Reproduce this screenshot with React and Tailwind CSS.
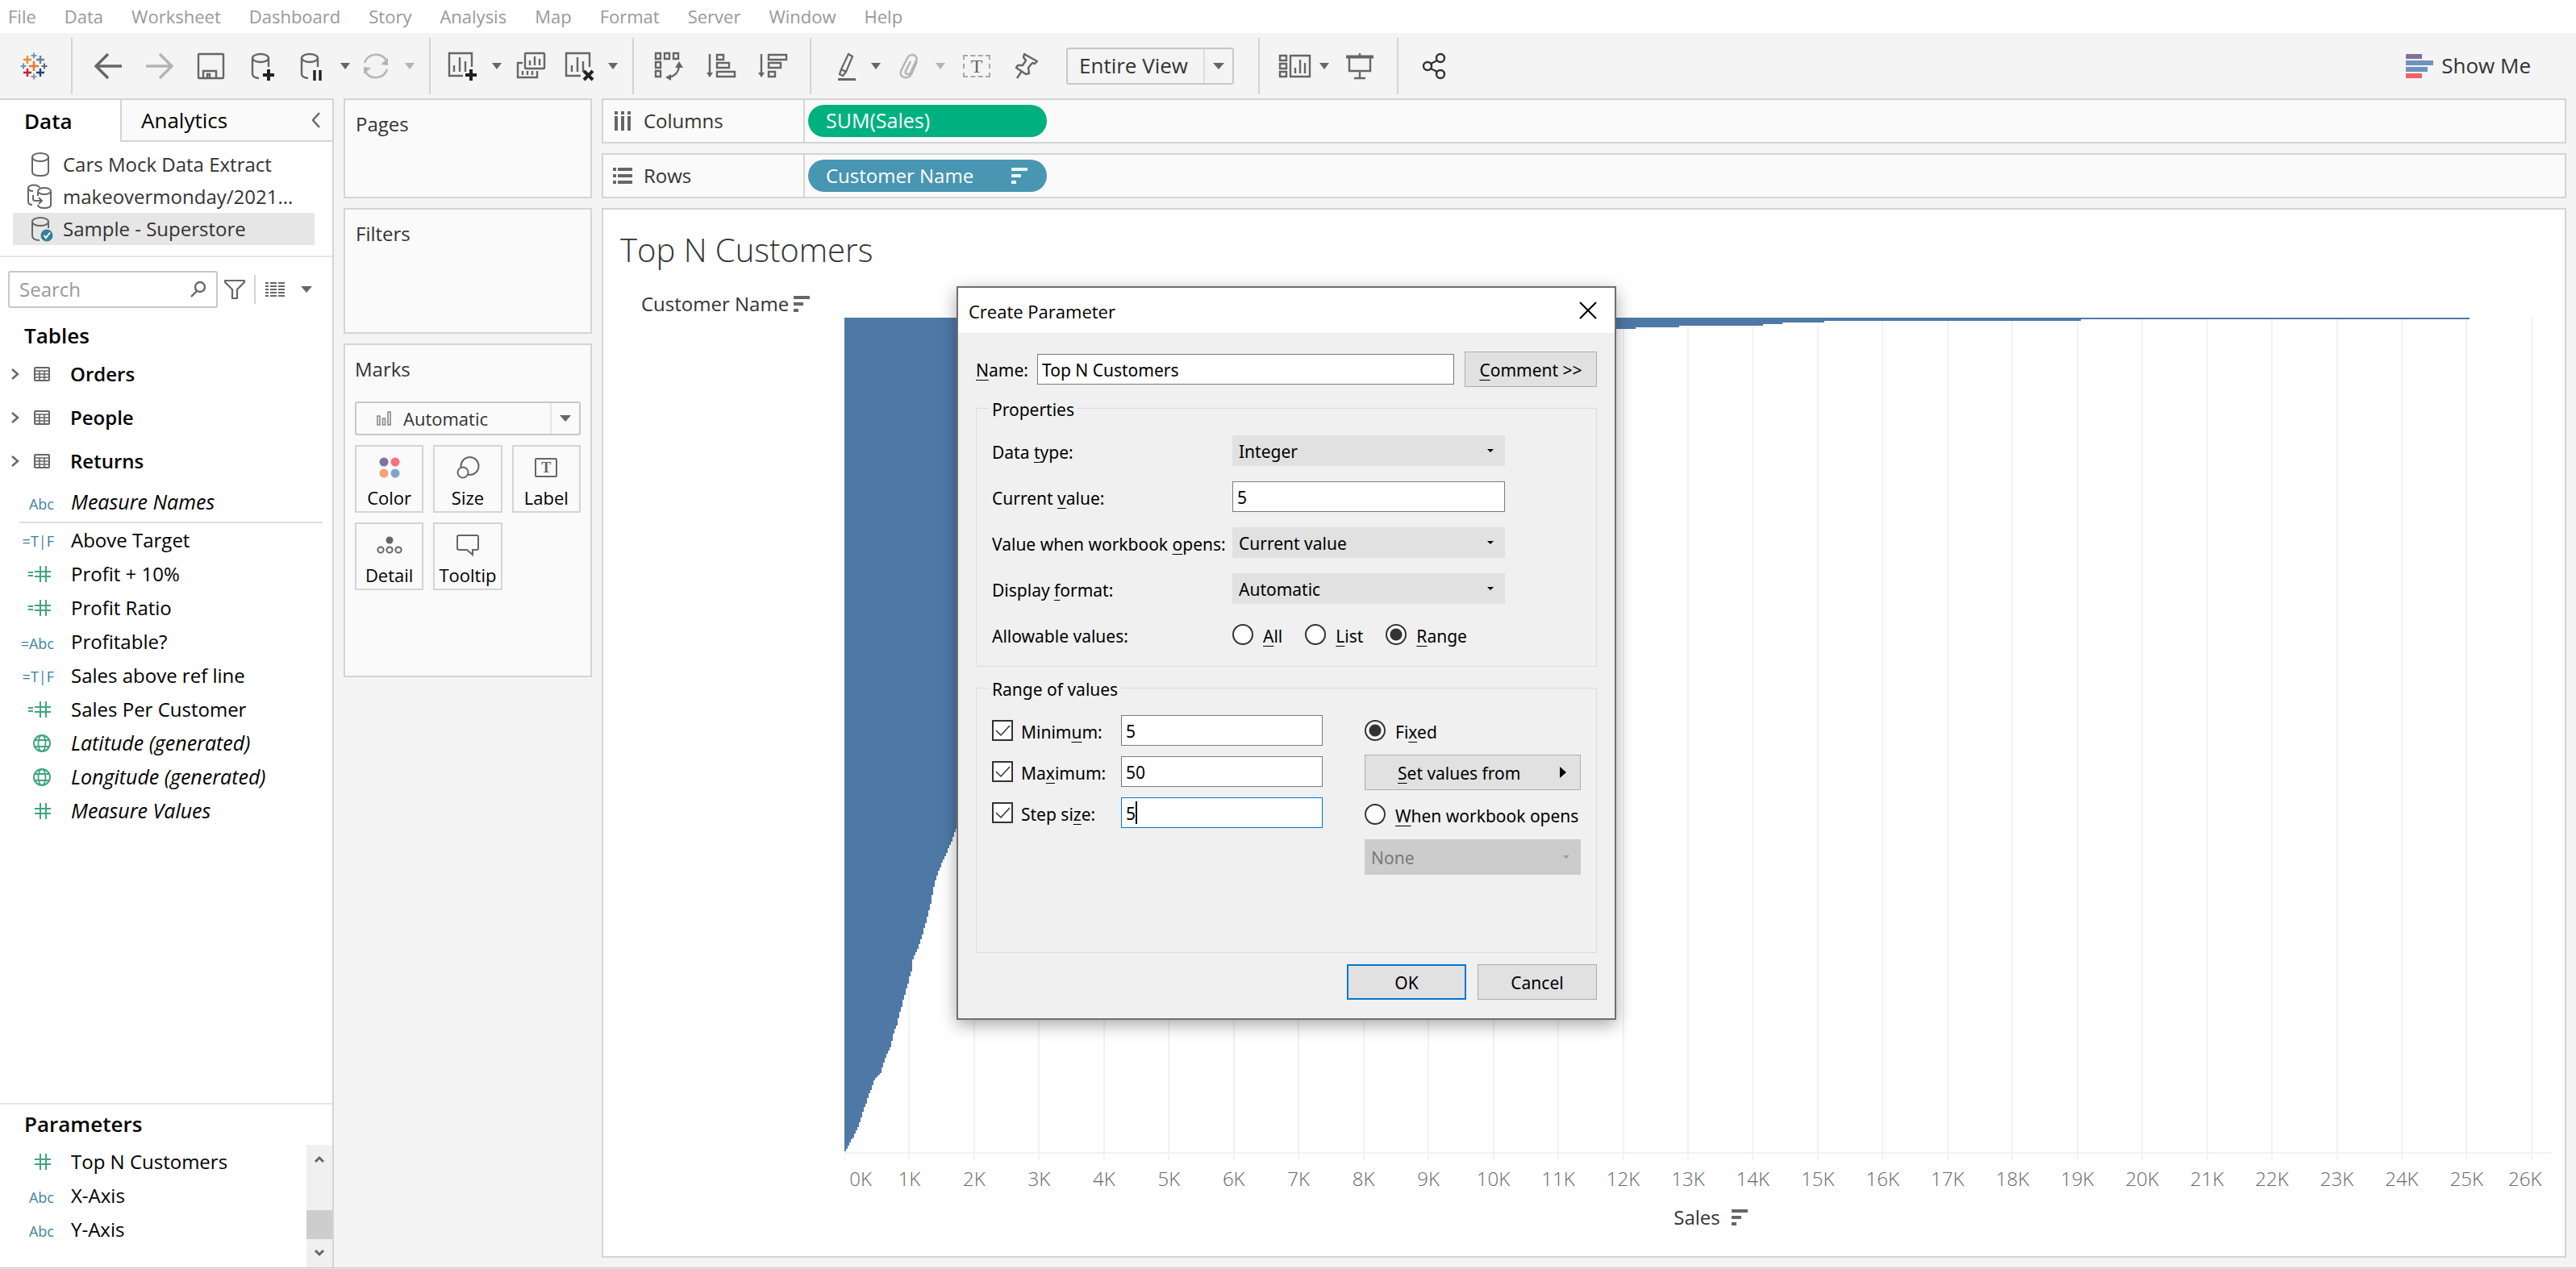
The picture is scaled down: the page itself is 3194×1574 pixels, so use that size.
import { useState } from "react";
import clsx from "clsx";

const MENUS = ["File", "Data", "Worksheet", "Dashboard", "Story", "Analysis", "Map", "Format", "Server", "Window", "Help"];

const FIELDS = [
  { kind: "calcBool", name: "Above Target" },
  { kind: "calcNumber", name: "Profit + 10%" },
  { kind: "calcNumber", name: "Profit Ratio" },
  { kind: "calcText", name: "Profitable?" },
  { kind: "calcBool", name: "Sales above ref line" },
  { kind: "calcNumber", name: "Sales Per Customer" },
  { kind: "geo", name: "Latitude (generated)", generated: true },
  { kind: "geo", name: "Longitude (generated)", generated: true },
  { kind: "number", name: "Measure Values", generated: true }
];

const PARAMETERS = [
  { kind: "number", name: "Top N Customers" },
  { kind: "text", name: "X-Axis" },
  { kind: "text", name: "Y-Axis" }
];

// Plot area units: one unit is one pixel at the default window size
const PLOT_W = 2116;
const PLOT_H = 1037;
const UNITS_PER_K = 80.46;

// The few top customers, one 2px row each
const TOP_BARS = [2015, 1533, 1215, 1163, 1139, 1035, 981, 930, 890, 860, 830];

// [y, width] outline of the long tail, widths interpolated in between
const TAIL = [
  [22, 790], [60, 560], [120, 430], [220, 330], [340, 260], [460, 200], [560, 165], [620, 142],
  [632, 139], [648, 133], [662, 127], [680, 119], [696, 113], [725, 107], [749, 101],
  [763, 97], [781, 91], [794, 85], [809, 83], [824, 79], [853, 71], [876, 65],
  [889, 60], [901, 58], [916, 51], [935, 45], [944, 37], [956, 33], [973, 27], [990, 21],
  [1002, 17], [1015, 11], [1025, 5], [1034, 1]
];

function buildOutline() {
  let d = "M0 0";
  TOP_BARS.forEach((w, i) => {
    d += `H${w}V${(i + 1) * 2}`;
  });
  for (let i = 1; i < TAIL.length; i++) {
    const [y0, w0] = TAIL[i - 1];
    const [y1, w1] = TAIL[i];
    for (let y = y0; y < y1; y += 2) {
      const w = w0 + ((w1 - w0) * (y - y0)) / (y1 - y0);
      d += `H${Math.round(w / 2) * 2}V${Math.min(y + 2, y1)}`;
    }
  }
  return `${d}H0Z`;
}

const OUTLINE = buildOutline();
const TICKS = Array.from({ length: 27 }, (_, i) => i);

function Icon({ children, className = "size-9", box = "0 0 36 36", color = "#666" }) {
  return (
    <svg viewBox={box} className={clsx("shrink-0 overflow-visible", className)} fill="none" stroke={color} strokeWidth="2.4" aria-hidden="true">
      {children}
    </svg>
  );
}

function Caret({ className = "h-2 w-3", color = "#666" }) {
  return (
    <svg viewBox="0 0 12 7" preserveAspectRatio="none" className={clsx("shrink-0", className)} fill={color} aria-hidden="true">
      <path d="M0 0H12L6 7Z" />
    </svg>
  );
}

function Tool({ label, className, children }) {
  return (
    <button type="button" aria-label={label} className={clsx("flex h-9 shrink-0 items-center", className)}>
      {children}
    </button>
  );
}

function Separator({ className }) {
  return <div className={clsx("h-[70px] w-0.5 shrink-0 bg-[#d4d4d4]", className)} />;
}

function SortBars({ className, color = "#666" }) {
  return (
    <svg viewBox="0 0 20 20" className={clsx("size-5 shrink-0", className)} fill={color} aria-hidden="true">
      <path d="M0 0H20V4H0ZM0 8H12V12H0ZM0 16H6V20H0Z" />
    </svg>
  );
}

function Logo() {
  const plus = (x, y, r, w, c) => <path d={`M${x - r} ${y}H${x + r}M${x} ${y - r}V${y + r}`} stroke={c} strokeWidth={w} />;
  return (
    <Icon>
      {plus(18, 18, 6, 2.6, "#e8762d")}
      {plus(10, 10, 5, 2.4, "#eb912c")}
      {plus(26, 10, 5, 2.4, "#59879b")}
      {plus(10, 26, 5, 2.4, "#c72035")}
      {plus(26, 26, 5, 2.4, "#1f447e")}
      {plus(18, 5, 3.5, 2, "#7199a6")}
      {plus(18, 31, 3.5, 2, "#8b93b8")}
      {plus(5, 18, 3.5, 2, "#7199a6")}
      {plus(31, 18, 3.5, 2, "#5b6591")}
    </Icon>
  );
}

function Toolbar() {
  return (
    <div className="flex h-[81px] items-center">
      <Tool label="Start page" className="ml-6"><Logo /></Tool>
      <Separator className="ml-7" />
      <Tool label="Undo" className="ml-6.5">
        <Icon><path d="M35 18H3M18 3L3 18L18 33" strokeWidth="3.4" /></Icon>
      </Tool>
      <Tool label="Redo" className="ml-7">
        <Icon color="#b4b4b4"><path d="M1 18H33M18 3L33 18L18 33" strokeWidth="3.4" /></Icon>
      </Tool>
      <Tool label="Save" className="ml-7">
        <Icon><rect x="2" y="3" width="31" height="30" rx="1" /><path d="M8 33V24H24V33M13 33V28H16V33" /></Icon>
      </Tool>
      <Tool label="New data source" className="ml-7">
        <Icon>
          <ellipse cx="15" cy="8" rx="10" ry="5" />
          <path d="M5 8V28Q5 32 13 33M25 8V19" />
          <path d="M25 22V36M18 29H32" stroke="#222" strokeWidth="4" />
        </Icon>
      </Tool>
      <Tool label="Pause auto updates" className="ml-6">
        <Icon>
          <ellipse cx="16" cy="8" rx="10" ry="5" />
          <path d="M6 8V28Q6 32 14 33M26 8V19" />
          <path d="M22 23V36M29 23V36" stroke="#222" strokeWidth="3.4" />
        </Icon>
      </Tool>
      <Tool label="Update options" className="ml-4.5"><Caret /></Tool>
      <Tool label="Run update" className="ml-3.5">
        <Icon color="#b4b4b4">
          <path d="M4 14A15 15 0 0 1 31 11M32 22A15 15 0 0 1 5 25" />
          <path d="M33 8V17L24 16ZM3 28V19L12 20Z" fill="#b4b4b4" stroke="none" />
        </Icon>
      </Tool>
      <Tool label="Run options" className="ml-4.5"><Caret color="#b4b4b4" /></Tool>
      <Separator className="ml-4.5" />
      <Tool label="New worksheet" className="ml-5">
        <Icon>
          <path d="M20 30H3V2H31V19" />
          <path d="M9 25V17M16 25V7M23 25V12" />
          <path d="M30 22V36M23 29H37" stroke="#222" strokeWidth="4" />
        </Icon>
      </Tool>
      <Tool label="New sheet options" className="ml-5"><Caret /></Tool>
      <Tool label="Duplicate" className="ml-4.5">
        <Icon>
          <rect x="11" y="2" width="24" height="19" rx="1" />
          <path d="M17 17V11M23 17V6M29 17V9" />
          <path d="M8 14H2V32H26V24M8 29V24M14 29V24M20 29V24" />
        </Icon>
      </Tool>
      <Tool label="Clear sheet" className="ml-6">
        <Icon>
          <path d="M20 30H2V2H31V19" />
          <path d="M9 25V17M16 25V7M23 25V12" />
          <path d="M24 24L35 35M35 24L24 35" stroke="#222" strokeWidth="4" />
        </Icon>
      </Tool>
      <Tool label="Clear options" className="ml-4.5"><Caret /></Tool>
      <Separator className="ml-4.5" />
      <Tool label="Swap rows and columns" className="ml-6">
        <Icon>
          <path d="M3 2H9V9H3ZM14 2H20V9H14ZM25 2H31V9H25ZM3 13H9V20H3ZM3 24H9V31H3Z" />
          <path d="M32 18Q31 29 20 32" />
          <path d="M32 12L37 20H27ZM15 32L22 28V36Z" fill="#666" stroke="none" />
        </Icon>
      </Tool>
      <Tool label="Sort ascending" className="ml-7.5">
        <Icon>
          <path d="M4 3V28M13 4H21V10H13ZM13 14H28V20H13ZM13 25H35V31H13Z" />
          <path d="M0 26H8L4 32Z" fill="#666" stroke="none" />
        </Icon>
      </Tool>
      <Tool label="Sort descending" className="ml-7">
        <Icon>
          <path d="M4 3V28M13 4H35V10H13ZM13 14H28V20H13ZM13 25H21V31H13Z" />
          <path d="M0 26H8L4 32Z" fill="#666" stroke="none" />
        </Icon>
      </Tool>
      <Separator className="ml-7" />
      <Tool label="Highlight" className="ml-6.5">
        <Icon>
          <path d="M20 3L25 6L17 25L11 22ZM11 22L9 28L13 30L17 25" strokeWidth="2.2" />
          <path d="M7 34.5H29" strokeWidth="3" />
        </Icon>
      </Tool>
      <Tool label="Highlight options" className="ml-3"><Caret /></Tool>
      <Tool label="Group members" className="ml-4.5">
        <Icon color="#b4b4b4">
          <path d="M27 12L20 28C17 35 4 33 7 24L15 8C18 1 29 4 26 11L19 26C17 30 11 28 13 24L19 12" />
        </Icon>
      </Tool>
      <Tool label="Group options" className="ml-3.5"><Caret color="#b4b4b4" /></Tool>
      <Tool label="Show mark labels" className="ml-5.5">
        <span className="flex h-7 w-[34px] items-center justify-center border-2 border-dashed border-[#a8a8a8] font-['Liberation_Serif',serif] text-[24px] leading-none text-[#666]">T</span>
      </Tool>
      <Tool label="Fix axes" className="ml-6.5">
        <Icon>
          <path d="M16 3L32 12L29 15L26 14L21 20L22 27L18 28L6 20L8 17L14 17L18 11L15 7ZM13 24L7 33" strokeLinejoin="round" />
        </Icon>
      </Tool>
      <div className="relative ml-8 flex h-[46px] w-[208px] shrink-0 items-center">
        <select aria-label="Fit" className="size-full appearance-none rounded-[3px] border-2 border-[#c8c8c8] pl-3.5 text-[26px] text-[#333]">
          <option>Entire View</option>
        </select>
        <span className="pointer-events-none absolute inset-y-0.5 right-0.5 flex w-9 items-center justify-center border-l-2 border-[#dedede]">
          <Caret className="h-2 w-3.5" />
        </span>
      </div>
      <Separator className="ml-7.5" />
      <Tool label="Show or hide cards" className="ml-6">
        <Icon className="h-9 w-10" box="0 0 40 36">
          <path d="M1 5H9V11H1ZM1 15H9V21H1ZM1 25H9V31H1ZM14 5H38V31H14Z" />
          <path d="M20 27V20M26 27V10M32 27V14" />
        </Icon>
      </Tool>
      <Tool label="Card options" className="ml-2.5"><Caret /></Tool>
      <Tool label="Presentation mode" className="ml-5">
        <Icon>
          <path d="M1 6.5H35" strokeWidth="4" />
          <path d="M5 8V24H31V8M18 2V6M18 24V33M11 33H25" />
        </Icon>
      </Tool>
      <Separator className="ml-7" />
      <Tool label="Share" className="ml-6.5">
        <Icon color="#333">
          <circle cx="10" cy="18" r="5" />
          <circle cx="26" cy="8" r="5" />
          <circle cx="26" cy="28" r="5" />
          <path d="M14 15L22 11M14 21L22 25" />
        </Icon>
      </Tool>
      <button type="button" className="mr-14 ml-auto flex items-center gap-2.5 text-[26px] text-[#333]">
        <svg viewBox="0 0 34 30" className="h-[30px] w-[34px]" aria-hidden="true">
          <path d="M0 0H20V6H0Z" fill="#85709a" />
          <path d="M0 8H34V14H0Z" fill="#6c94bf" />
          <path d="M0 16H27V22H0Z" fill="#6c94bf" />
          <path d="M0 24H20V30H0Z" fill="#f4606c" />
        </svg>
        Show Me
      </button>
    </div>
  );
}

function Cylinder({ badge, joined }) {
  if (joined) {
    return (
      <Icon className="h-[30px] w-[30px]" box="0 0 30 30">
        <path d="M15 4A7 3.500 0 1 0 1 4V21Q1 25 6 25M1 4Q1 8 7 8M7 13V18Q7 20 10 20H17M14 16L18 20L14 24" strokeWidth="2" />
        <path d="M13 14V9M13 25Q13 29 21 29T29 25V9" strokeWidth="2" />
        <ellipse cx="21" cy="8" rx="8" ry="4" strokeWidth="2" />
      </Icon>
    );
  }
  return (
    <Icon className="h-[30px] w-[22px]" box="0 0 22 30">
      <ellipse cx="11" cy="6" rx="10" ry="5" strokeWidth="2" />
      <path d={badge ? "M1 6V23Q1 29 10 29M21 6V14" : "M1 6V24Q1 29 11 29T21 24V6"} strokeWidth="2" />
      {badge && (
        <>
          <circle cx="19" cy="23" r="7.500" fill="#36809f" stroke="none" />
          <path d="M15.500 23L18 26L23 19.500" stroke="#fff" strokeWidth="2" />
        </>
      )}
    </Icon>
  );
}

function TypeIcon({ kind }) {
  if (kind === "text") return <span className="pt-1 text-[18px] font-medium text-[#3d84a3]">Abc</span>;
  if (kind === "calcText") return <span className="pt-1 text-[18px] font-medium text-[#3d84a3]">=Abc</span>;
  if (kind === "calcBool") return <span className="pt-0.5 text-[18px] font-medium text-[#36809f]">=T|F</span>;
  if (kind === "geo") {
    return (
      <Icon className="mr-1 size-[22px]" box="0 0 22 22" color="#3fa67c">
        <circle cx="11" cy="11" r="10" strokeWidth="2" />
        <ellipse cx="11" cy="11" rx="4.500" ry="10" strokeWidth="1.800" />
        <path d="M2 7H20M2 15H20" strokeWidth="1.800" />
      </Icon>
    );
  }
  return (
    <>
      {kind === "calcNumber" && (
        <Icon className="mr-0.5 h-2 w-1.5" box="0 0 6 8" color="#3fa67c">
          <path d="M0 2H6M0 6H6" strokeWidth="2" />
        </Icon>
      )}
      <Icon className="mr-1 size-5" box="0 0 20 20" color="#3fa67c">
        <path d="M7 0V20M14 0V20M0 7H20M0 13H20" strokeWidth="2" />
      </Icon>
    </>
  );
}

function FieldRow({ kind, name, generated, className = "h-[42px]" }) {
  return (
    <li className={clsx("flex items-center whitespace-nowrap text-black", className)}>
      <span className="flex w-[67px] items-center justify-end">
        <TypeIcon kind={kind} />
      </span>
      <span className={clsx("ml-[21px]", generated ? "text-[25px] italic" : "text-[24px]")}>{name}</span>
    </li>
  );
}

function DataPane() {
  const [query, setQuery] = useState("");
  return (
    <aside className="flex w-[414px] shrink-0 flex-col border-t-2 border-r-2 border-[#d4d4d4] bg-white">
      <div className="flex h-[52px] text-[26px] text-black">
        <button type="button" className="w-[149px] pr-1 pl-[30px] text-left font-semibold">Data</button>
        <div className="flex flex-1 items-center justify-between border-b-2 border-l-2 border-[#d4d4d4] bg-[#fafafa] pr-3.5 pl-6">
          <button type="button">Analytics</button>
          <button type="button" aria-label="Collapse pane">
            <Icon className="h-5 w-3" box="0 0 12 20"><path d="M10 1L2 10L10 19" /></Icon>
          </button>
        </div>
      </div>

      <ul className="pt-2 pr-[22px] pl-4 text-[24px] text-[#333]">
        <li className="flex h-10 items-center gap-[17px] pl-[23px]"><Cylinder />Cars Mock Data Extract</li>
        <li className="flex h-10 items-center gap-3.5 pl-[18px]"><Cylinder joined />makeovermonday/2021...</li>
        <li className="flex h-10 items-center gap-[17px] bg-[#e6e6e6] pl-[23px]"><Cylinder badge />Sample - Superstore</li>
      </ul>

      <div className="mt-[13px] h-0.5 bg-[#e6e6e6]" />

      <div className="mt-[17px] flex h-[46px] items-center pl-2.5">
        <label className="flex h-full w-[260px] items-center rounded-[3px] border-2 border-[#c8c8c8] pr-3 pl-3">
          <input
            type="text"
            aria-label="Search"
            placeholder="Search"
            value={query}
            onChange={(e) => setQuery(e.target.value)}
            className="w-full min-w-0 text-[24px] text-[#333] outline-none placeholder:text-[#999]"
          />
          <Icon className="size-5" box="0 0 20 20">
            <circle cx="12" cy="7" r="6" />
            <path d="M8 12L1 19" />
          </Icon>
        </label>
        <button type="button" aria-label="Filter fields" className="ml-2">
          <Icon className="h-6 w-[26px]" box="0 0 26 24">
            <path d="M1 1H25V3L16 12V23H10V12L1 3Z" strokeWidth="2.200" strokeLinejoin="round" />
          </Icon>
        </button>
        <div className="ml-[11px] h-9 w-0.5 bg-[#d4d4d4]" />
        <button type="button" aria-label="View fields" className="ml-3 flex items-center gap-5">
          <svg viewBox="0 0 24 18" className="h-[18px] w-6" stroke="#666" strokeWidth="2" shapeRendering="crispEdges" aria-hidden="true">
            <path d="M0 1H4M6 1H14M16 1H24M0 5H4M6 5H14M16 5H24M0 9H4M6 9H14M16 9H24M0 13H4M6 13H14M16 13H24M0 17H4M6 17H14M16 17H24" />
          </svg>
          <Caret className="h-2 w-3.5" />
        </button>
      </div>

      <h2 className="mt-4 flex h-9 items-center pl-[30px] text-[26px] font-semibold text-black">Tables</h2>
      <ul className="mt-[3px]">
        {["Orders", "People", "Returns"].map((name) => (
          <li key={name} className="flex h-[54px] items-center pl-3.5 text-[24px] font-semibold text-black">
            <button type="button" aria-label={`Expand ${name}`}>
              <Icon className="h-3.5 w-2.5" box="0 0 10 14"><path d="M1 1L8 7L1 13" /></Icon>
            </button>
            <Icon className="mr-[25px] ml-[18px] h-[18px] w-5" box="0 0 20 18">
              <rect x="1" y="1" width="18" height="16" rx="1" strokeWidth="2" />
              <path d="M1 5H19M1 9H19M1 13H19M7 5V17M13 5V17" strokeWidth="1.600" />
            </Icon>
            {name}
          </li>
        ))}
      </ul>

      <ul>
        <FieldRow kind="text" name="Measure Names" generated className="h-12" />
      </ul>
      <div className="mr-3 ml-6 h-0.5 bg-[#dedede]" />
      <ul>
        {FIELDS.map((f) => (
          <FieldRow key={f.name} {...f} />
        ))}
      </ul>

      <section className="mt-auto h-[204px] border-t-2 border-[#e6e6e6]">
        <h2 className="flex h-12 items-center pl-[30px] text-[26px] font-semibold text-black">Parameters</h2>
        <div className="flex pt-0.5">
          <ul className="flex-1">
            {PARAMETERS.map((p) => (
              <FieldRow key={p.name} {...p} />
            ))}
          </ul>
          <div className="flex h-[152px] w-8 flex-col items-center bg-[#f0f0f0]">
            <button type="button" aria-label="Scroll up" className="flex h-9 items-center">
              <Icon className="h-2 w-3" box="0 0 12 8"><path d="M1 7L6 2L11 7" strokeWidth="3" /></Icon>
            </button>
            <div className="mt-[46px] h-9 w-full bg-[#cdcdcd]" />
            <button type="button" aria-label="Scroll down" className="flex h-9 items-center">
              <Icon className="h-2 w-3" box="0 0 12 8"><path d="M1 1L6 6L11 1" strokeWidth="3" /></Icon>
            </button>
          </div>
        </div>
      </section>
    </aside>
  );
}

function MarkButton({ label, children }) {
  return (
    <button type="button" className="flex h-[84px] flex-col items-center border-2 border-[#d4d4d4] pt-2 text-[22px] leading-[30px] text-black">
      <span className="mb-1 flex h-9 items-center">{children}</span>
      {label}
    </button>
  );
}

function Cards() {
  return (
    <div className="flex w-[332px] shrink-0 flex-col gap-3 px-3 text-[24px] text-[#333]">
      <section className="h-[124px] border-2 border-[#d4d4d4] bg-[#fafafa] pt-3 pl-[13px]">Pages</section>
      <section className="h-[156px] border-2 border-[#d4d4d4] bg-[#fafafa] pt-3 pl-[13px]">Filters</section>
      <section className="h-[414px] border-2 border-[#d4d4d4] bg-[#fafafa] px-3">
        <h2 className="mt-3 leading-9">Marks</h2>
        <div className="relative mt-[22px] flex h-[42px] items-center">
          <select aria-label="Mark type" className="size-full appearance-none rounded-[3px] border-2 border-[#c8c8c8] pl-[58px] text-[22px] text-[#333]">
            <option>Automatic</option>
          </select>
          <svg viewBox="0 0 18 18" className="pointer-events-none absolute left-[27px] h-[18px] w-[18px]" fill="none" stroke="#888" strokeWidth="1.600" aria-hidden="true">
            <path d="M1 6H4V17H1ZM7.500 9H10.500V17H7.500ZM14 1H17V17H14Z" />
          </svg>
          <span className="pointer-events-none absolute inset-y-0.5 right-0.5 flex w-9 items-center justify-center border-l-2 border-[#e6e6e6]">
            <Caret className="h-2 w-3.5" />
          </span>
        </div>
        <div className="mt-3 grid grid-cols-3 gap-3">
          <MarkButton label="Color">
            <svg viewBox="0 0 26 26" className="size-[26px]" aria-hidden="true">
              <circle cx="6" cy="6" r="5.500" fill="#85709a" />
              <circle cx="20" cy="6" r="5.500" fill="#f9707f" />
              <circle cx="6" cy="20" r="5.500" fill="#f2a477" />
              <circle cx="20" cy="20" r="5.500" fill="#80a4cc" />
            </svg>
          </MarkButton>
          <MarkButton label="Size">
            <Icon className="size-7" box="0 0 28 28">
              <circle cx="16.500" cy="12" r="11" strokeWidth="2" />
              <circle cx="8" cy="20" r="6.500" fill="#fafafa" strokeWidth="2" />
            </Icon>
          </MarkButton>
          <MarkButton label="Label">
            <span className="flex h-6 w-7 items-center justify-center rounded-[2px] border-2 border-[#666] font-['Liberation_Serif',serif] text-[18px] leading-none font-bold text-[#666]">T</span>
          </MarkButton>
          <MarkButton label="Detail">
            <Icon className="h-6 w-8" box="0 0 32 24">
              <circle cx="16" cy="6" r="4.500" fill="#666" stroke="none" />
              <circle cx="5" cy="18" r="3.600" strokeWidth="2" />
              <circle cx="16" cy="18" r="3.600" strokeWidth="2" />
              <circle cx="27" cy="18" r="3.600" strokeWidth="2" />
            </Icon>
          </MarkButton>
          <MarkButton label="Tooltip">
            <Icon className="h-[26px] w-7" box="0 0 28 26">
              <path d="M3 1H25Q27 1 27 3V17Q27 19 25 19H20V25L13 19H3Q1 19 1 17V3Q1 1 3 1Z" strokeWidth="2" />
            </Icon>
          </MarkButton>
        </div>
      </section>
    </div>
  );
}

function Shelf({ label, icon, children }) {
  return (
    <div className="flex h-14 shrink-0 border-2 border-[#d4d4d4] bg-[#fafafa]">
      <div className="flex w-[250px] items-center gap-3.5 border-r-2 border-[#d4d4d4] pl-3 text-[24px] text-[#333]">
        {icon}
        {label}
      </div>
      <div className="flex items-center pl-1">{children}</div>
    </div>
  );
}

function Worksheet() {
  return (
    <section className="flex min-h-0 flex-1 flex-col border-2 border-[#d4d4d4] bg-white pr-[17px] pb-7.5 pl-[21px]">
      <h1 className="mt-5 h-[60px] text-[40px] leading-[60px] font-light text-[#333]">Top N Customers</h1>
      <div className="mt-5 flex h-[34px] items-center gap-1.5 pl-[26px] text-[24px] font-medium text-[#333]">
        Customer Name
        <SortBars />
      </div>
      <div className="flex min-h-0 flex-1 flex-col pl-[278px]">
        <svg viewBox={`0 0 ${PLOT_W} ${PLOT_H + 9}`} preserveAspectRatio="none" className="block min-h-0 w-full flex-1" shapeRendering="crispEdges" role="img" aria-label="Sales by customer">
          {TICKS.map((k) => (
            <rect key={k} x={Math.round(k * UNITS_PER_K) - 1} y="0" width="2" height={PLOT_H + 9} fill="#f2f2f2" />
          ))}
          <rect x="0" y={PLOT_H - 2} width={PLOT_W} height="2" fill="#f2f2f2" />
          <path d={OUTLINE} fill="#4e79a7" />
        </svg>
        <div className="mt-1 flex h-9 items-center text-[24px] font-light text-[#666]">
          {TICKS.map((k) => (
            <span key={k} className="min-w-0 text-center" style={{ flex: k === 0 ? 0.5 : k === 26 ? 0.8 : 1 }}>
              {k}K
            </span>
          ))}
        </div>
        <div className="mt-3 flex h-9 items-center justify-center gap-3.5 pl-8 text-[24px] font-medium text-[#333]">
          Sales
          <SortBars />
        </div>
      </div>
    </section>
  );
}

// "&" marks the letter that carries the keyboard shortcut
function Mnemonic({ text }) {
  const at = text.indexOf("&");
  if (at < 0) return <span>{text}</span>;
  return (
    <span>
      {text.slice(0, at)}
      <u className="decoration-1 underline-offset-4">{text[at + 1]}</u>
      {text.slice(at + 2)}
    </span>
  );
}

function TextBox({ id, className, ...rest }) {
  return <input id={id} type="text" className={clsx("h-[38px] border bg-white px-[5px] pt-0.5 outline-none", className)} {...rest} />;
}

function Combo({ id, value }) {
  return (
    <div className="relative flex h-[38px] w-[338px] items-center">
      <select id={id} className="size-full appearance-none bg-[#e1e1e1] pt-0.5 pl-2">
        <option>{value}</option>
      </select>
      <Caret className="pointer-events-none absolute right-3.5 h-1 w-2" color="#000" />
    </div>
  );
}

function Radio({ name, label, checked, onChange }) {
  return (
    <label className="flex items-center gap-3">
      <input
        type="radio"
        name={name}
        checked={checked}
        onChange={onChange}
        className="size-[26px] appearance-none rounded-full border-2 border-[#333] bg-white checked:bg-[radial-gradient(circle,#333_0_7px,#fff_8px)]"
      />
      <span className="pt-1"><Mnemonic text={label} /></span>
    </label>
  );
}

function LimitRow({ id, label, value, onChange, focused }) {
  const [on, setOn] = useState(true);
  return (
    <div className="flex h-[38px] items-center">
      <label className="flex w-40 items-center gap-2.5">
        <span className="relative flex size-[26px]">
          <input type="checkbox" checked={on} onChange={(e) => setOn(e.target.checked)} className="size-[26px] appearance-none border-2 border-[#333] bg-white" />
          {on && (
            <svg viewBox="0 0 26 26" className="pointer-events-none absolute inset-0" fill="none" stroke="#333" strokeWidth="1.500" aria-hidden="true">
              <path d="M5 13L11 19L22 7" />
            </svg>
          )}
        </span>
        <span className="pt-1"><Mnemonic text={label} /></span>
      </label>
      <span className="relative flex items-center">
        <TextBox
          id={id}
          aria-label={label.replace("&", "")}
          value={value}
          onChange={(e) => onChange(e.target.value)}
          className={clsx("w-[250px]", focused ? "border-[#0078d7]" : "border-[#7a7a7a]")}
        />
        {focused && <span className="absolute left-[18px] h-7 w-0.5 bg-black" />}
      </span>
    </div>
  );
}

function CreateParameterDialog() {
  const [name, setName] = useState("Top N Customers");
  const [current, setCurrent] = useState("5");
  const [allowable, setAllowable] = useState("range");
  const [source, setSource] = useState("fixed");
  const [limits, setLimits] = useState({ min: "5", max: "50", step: "5" });
  const setLimit = (key) => (v) => setLimits((prev) => ({ ...prev, [key]: v }));

  return (
    <div
      role="dialog"
      aria-labelledby="dialog-title"
      className="absolute top-[355px] left-[1186px] w-[818px] border-2 border-[#6f6f6f] bg-[#f0f0f0] font-['Noto_Sans','Open_Sans',sans-serif] text-[21px] leading-7 text-black shadow-[0_6px_20px_rgba(0,0,0,0.35)]"
    >
      <div className="flex h-14 items-center justify-between bg-white pr-[23px] pl-[13px]">
        <h2 id="dialog-title" className="pt-0.5 font-['Open_Sans',sans-serif] text-[22px]">Create Parameter</h2>
        <button type="button" aria-label="Close">
          <Icon className="size-5" box="0 0 20 20" color="#000"><path d="M0 0L20 20M20 0L0 20" strokeWidth="2" /></Icon>
        </button>
      </div>

      <div className="px-[22px] pt-[23px] pb-[23px]">
        <div className="flex h-11 items-center">
          <label htmlFor="param-name" className="w-[76px] pt-0.5"><Mnemonic text="&Name:" /></label>
          <TextBox id="param-name" value={name} onChange={(e) => setName(e.target.value)} className="min-w-0 flex-1 border-[#7a7a7a]" />
          <button type="button" className="ml-[13px] h-11 w-[164px] border border-[#adadad] bg-[#e1e1e1] pt-0.5"><Mnemonic text="&Comment >>" /></button>
        </div>

        <fieldset className="mt-3 border border-[#dcdcdc] pb-5 pl-[19px]">
          <legend className="-ml-1 px-1 pt-1 leading-6">Properties</legend>
          <div className="mt-5 grid auto-rows-[38px] grid-cols-[298px_1fr] items-center gap-y-[19px]">
            <label htmlFor="data-type" className="pt-1"><Mnemonic text="Data &type:" /></label>
            <Combo id="data-type" value="Integer" />
            <label htmlFor="current-value" className="pt-1"><Mnemonic text="Current &value:" /></label>
            <TextBox id="current-value" value={current} onChange={(e) => setCurrent(e.target.value)} className="w-[338px] border-[#7a7a7a]" />
            <label htmlFor="on-open" className="pt-1 whitespace-nowrap"><Mnemonic text="Value when workbook &opens:" /></label>
            <Combo id="on-open" value="Current value" />
            <label htmlFor="display-format" className="pt-1"><Mnemonic text="Display &format:" /></label>
            <Combo id="display-format" value="Automatic" />
            <span className="pt-1">Allowable values:</span>
            <div className="flex gap-7">
              <Radio name="allowable" label="&All" checked={allowable === "all"} onChange={() => setAllowable("all")} />
              <Radio name="allowable" label="&List" checked={allowable === "list"} onChange={() => setAllowable("list")} />
              <Radio name="allowable" label="&Range" checked={allowable === "range"} onChange={() => setAllowable("range")} />
            </div>
          </div>
        </fieldset>

        <fieldset className="mt-3 border border-[#dcdcdc] pr-[19px] pb-24 pl-[19px]">
          <legend className="-ml-1 px-1 pt-1 leading-6">Range of values</legend>
          <div className="mt-5 flex justify-between">
            <div className="flex flex-col gap-[13px]">
              <LimitRow id="limit-min" label="Minim&um:" value={limits.min} onChange={setLimit("min")} />
              <LimitRow id="limit-max" label="Ma&ximum:" value={limits.max} onChange={setLimit("max")} />
              <LimitRow id="limit-step" label="Step si&ze:" value={limits.step} onChange={setLimit("step")} focused />
            </div>
            <div className="flex w-[268px] flex-col">
              <div className="flex h-[38px] items-center">
                <Radio name="source" label="Fi&xed" checked={source === "fixed"} onChange={() => setSource("fixed")} />
              </div>
              <button type="button" className="mt-[11px] flex h-11 items-center justify-between border border-[#adadad] bg-[#e1e1e1] pr-[17px] pl-10">
                <span className="pt-0.5"><Mnemonic text="&Set values from" /></span>
                <svg viewBox="0 0 8 14" className="h-3.5 w-2" aria-hidden="true"><path d="M0 0L8 7L0 14Z" /></svg>
              </button>
              <div className="mt-[11px] flex h-[38px] items-center whitespace-nowrap">
                <Radio name="source" label="&When workbook opens" checked={source === "open"} onChange={() => setSource("open")} />
              </div>
              <div className="relative mt-3 flex h-11 items-center">
                <select disabled aria-label="Source field" className="size-full appearance-none bg-[#ccc] pt-0.5 pl-2 text-[#7a7a7a] opacity-100">
                  <option>None</option>
                </select>
                <Caret className="pointer-events-none absolute right-3.5 h-1 w-2" color="#9a9a9a" />
              </div>
            </div>
          </div>
        </fieldset>

        <div className="mt-3.5 flex justify-end gap-3.5">
          <button type="button" className="h-11 w-[148px] border-2 border-[#0078d7] bg-[#e1e1e1] pt-0.5">OK</button>
          <button type="button" className="h-11 w-[148px] border border-[#adadad] bg-[#e1e1e1] pt-0.5">Cancel</button>
        </div>
      </div>
    </div>
  );
}

export default function App() {
  return (
    <div className="relative flex h-screen min-h-[1300px] flex-col overflow-hidden bg-[#f4f4f4] font-['Open_Sans','Noto_Sans',sans-serif]">
      <nav className="flex h-[41px] shrink-0 items-center gap-[35px] bg-white pl-2.5 text-[22px] text-[#999]">
        {MENUS.map((m) => (
          <button key={m} type="button">{m}</button>
        ))}
      </nav>
      <Toolbar />
      <main className="flex min-h-0 flex-1">
        <DataPane />
        <Cards />
        <div className="flex min-w-0 flex-1 flex-col gap-3 pr-3 pb-3">
          <Shelf
            label="Columns"
            icon={
              <svg viewBox="0 0 24 24" className="size-6" fill="#666" aria-hidden="true">
                <path d="M2 0H6V4H2ZM10 0H14V4H10ZM18 0H22V4H18ZM2 6H6V24H2ZM10 6H14V24H10ZM18 6H22V24H18Z" />
              </svg>
            }
          >
            <button type="button" className="flex h-10 w-[296px] items-center rounded-full bg-[#00b180] px-[22px] text-[25px] font-medium text-white">SUM(Sales)</button>
          </Shelf>
          <Shelf
            label="Rows"
            icon={
              <svg viewBox="0 0 24 20" className="h-5 w-6" fill="#666" aria-hidden="true">
                <path d="M0 0H4V4H0ZM6 0H24V4H6ZM0 8H4V12H0ZM6 8H24V12H6ZM0 16H4V20H0ZM6 16H24V20H6Z" />
              </svg>
            }
          >
            <button type="button" className="flex h-10 w-[296px] items-center justify-between rounded-full bg-[#4996b2] pr-6 pl-[22px] text-[24px] font-medium text-white">
              Customer Name
              <SortBars color="#eef5f8" />
            </button>
          </Shelf>
          <Worksheet />
        </div>
      </main>
      <div className="h-0.5 shrink-0 border-t border-[#c8c8c8] bg-[#e6e6e6]" />
      <CreateParameterDialog />
    </div>
  );
}
